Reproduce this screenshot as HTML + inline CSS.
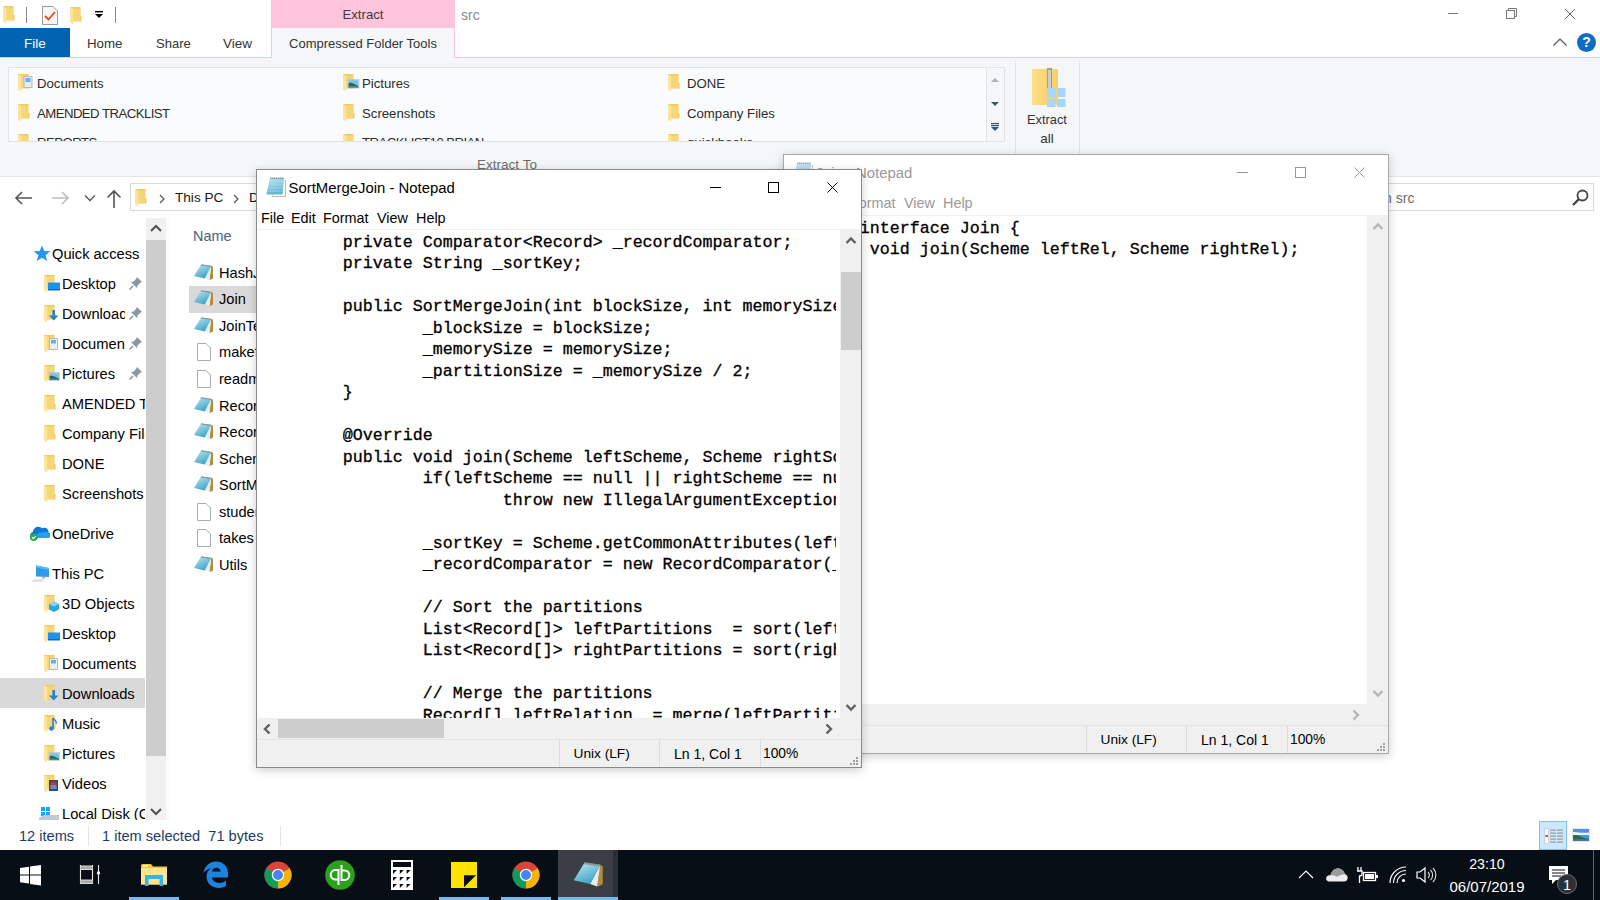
<!DOCTYPE html><html><head><meta charset="utf-8"><style>
html,body{margin:0;padding:0;width:1600px;height:900px;overflow:hidden;background:#fff;}
.a{position:absolute;}
.t{position:absolute;white-space:pre;}
.ls{font-family:"Liberation Sans",sans-serif;}
.lm{font-family:"Liberation Mono",monospace;-webkit-text-stroke:0.3px #000;}
.win{position:absolute;overflow:hidden;}
</style></head><body>
<svg width="0" height="0" style="position:absolute"><defs><linearGradient id="npb" x1="0" y1="0" x2="0.6" y2="1"><stop offset="0" stop-color="#c4ebf5"/><stop offset="1" stop-color="#3aa2c4"/></linearGradient></defs></svg>
<div class="a" style="left:0px;top:0px;width:1600px;height:28px;background:#fff"></div><svg class="a" style="left:3px;top:6px;" width="20" height="19" viewBox="0 0 20 19"><path d="M0 0 H10.5 V9 H11.5 V14.5 H0 Z" fill="#f2ca5c"/><path d="M3 1.5 H10 V14 H3 Z" fill="#f6d777"/><path d="M0 0 L3.2 2 V17.5 L0 15.5 Z" fill="#fde49a"/></svg><div class="a" style="left:26px;top:7px;width:1px;height:16px;background:#8a8a8a"></div><svg class="a" style="left:41px;top:5px;" width="18" height="21" viewBox="0 0 18 21"><path d="M1.5 1.5 H12 L16.5 6 V19.5 H1.5 Z" fill="#f7f7f7" stroke="#9a9a9a"/><path d="M4 11 L7.5 14.5 L14 7" fill="none" stroke="#e04a1a" stroke-width="1.8"/></svg><svg class="a" style="left:70px;top:7px;" width="20" height="19" viewBox="0 0 20 19"><path d="M0 0 H10.5 V9 H11.5 V14.5 H0 Z" fill="#f2ca5c"/><path d="M3 1.5 H10 V14 H3 Z" fill="#f6d777"/><path d="M0 0 L3.2 2 V17.5 L0 15.5 Z" fill="#fde49a"/></svg><svg class="a" style="left:94px;top:10px;" width="10" height="10" viewBox="0 0 10 10"><rect x="1" y="1" width="8" height="1.4" fill="#000"/><path d="M1 4 H9 L5 8 Z" fill="#000"/></svg><div class="a" style="left:115px;top:7px;width:1px;height:16px;background:#8a8a8a"></div><div class="a" style="left:271px;top:0px;width:184px;height:28px;background:#fec5dd"></div><div class="t ls" style="left:271px;top:5.0px;height:20px;line-height:20px;font-size:13.2px;color:#3b3b3b;width:184px;text-align:center;">Extract</div><div class="t ls" style="left:461px;top:5.0px;height:20px;line-height:20px;font-size:14px;color:#8c8c8c;">src</div><div class="a" style="left:1448px;top:13px;width:10px;height:1px;background:#777"></div><svg class="a" style="left:1504px;top:6px;" width="14" height="14" viewBox="0 0 14 14"><rect x="2.5" y="4.5" width="8" height="8" fill="none" stroke="#777"/><path d="M4.5 4.5 V2.5 H12.5 V10.5 H10.5" fill="none" stroke="#777"/></svg><svg class="a" style="left:1564px;top:8px;" width="12" height="12" viewBox="0 0 12 12"><path d="M1 1 L11 11 M11 1 L1 11" stroke="#666" stroke-width="1"/></svg><div class="a" style="left:0px;top:28px;width:70px;height:29px;background:#0063b1"></div><div class="t ls" style="left:0px;top:34.0px;height:20px;line-height:20px;font-size:13.5px;color:#fff;width:70px;text-align:center;">File</div><div class="t ls" style="left:87px;top:33.5px;height:20px;line-height:20px;font-size:13.3px;color:#333;">Home</div><div class="t ls" style="left:156px;top:33.5px;height:20px;line-height:20px;font-size:13px;color:#333;">Share</div><div class="t ls" style="left:223px;top:33.5px;height:20px;line-height:20px;font-size:13.5px;color:#333;">View</div><div class="a" style="left:0px;top:57px;width:1600px;height:1px;background:#fdc3dc"></div><div class="a" style="left:271px;top:28px;width:184px;height:30px;background:#f5f6f7;border-left:1px solid #fdc3dc;border-right:1px solid #fdc3dc;box-sizing:border-box"></div><div class="t ls" style="left:271px;top:33.5px;height:20px;line-height:20px;font-size:13px;color:#333;width:184px;text-align:center;">Compressed Folder Tools</div><svg class="a" style="left:1552px;top:37px;" width="16" height="10" viewBox="0 0 16 10"><path d="M1.5 8.5 L8 2 L14.5 8.5" fill="none" stroke="#555" stroke-width="1.2"/></svg><div class="a" style="left:1577px;top:33px;width:19px;height:19px;border-radius:50%;background:#0f6cc4;color:#fff;font-weight:bold;font-size:14px;line-height:19px;font-family:Liberation Sans,sans-serif;text-align:center">?</div><div class="a" style="left:0px;top:58px;width:1600px;height:118px;background:#f5f6f7"></div><div class="a" style="left:0px;top:176px;width:1600px;height:1px;background:#e4e5e7"></div><div class="a" style="left:8px;top:67px;width:997px;height:75px;background:#fafbfc;border:1px solid #e2e3e5;box-sizing:border-box"></div><div class="a" style="left:986px;top:67px;width:19px;height:75px;background:#f5f6f7;border:1px solid #e2e3e5;box-sizing:border-box"></div><svg class="a" style="left:989px;top:75px;" width="12" height="10" viewBox="0 0 12 10"><path d="M2 7 L6 3 L10 7 Z" fill="#a8b0ba"/></svg><svg class="a" style="left:989px;top:99px;" width="12" height="10" viewBox="0 0 12 10"><path d="M2 3 L6 7 L10 3 Z" fill="#3d5170"/></svg><svg class="a" style="left:989px;top:121px;" width="12" height="12" viewBox="0 0 12 12"><rect x="2" y="2" width="8" height="1.2" fill="#3d5170"/><rect x="2" y="4" width="8" height="1.2" fill="#3d5170"/><path d="M2 6 L6 10 L10 6 Z" fill="#3d5170"/></svg><div class="win" style="left:9px;top:68px;width:976px;height:73px"><svg class="a" style="left:9px;top:6.0px;" width="20" height="19" viewBox="0 0 20 19"><path d="M0 0 H10.5 V9 H11.5 V14.5 H0 Z" fill="#f2ca5c"/><path d="M3 1.5 H10 V14 H3 Z" fill="#f6d777"/><path d="M0 0 L3.2 2 V17.5 L0 15.5 Z" fill="#fde49a"/><rect x="6" y="2.5" width="8" height="11" fill="#e9ecef" stroke="#a9aeb3" stroke-width="0.8"/><path d="M7.5 4 h5 v4 h-5z" fill="#5fb2ec"/></svg><div class="t ls" style="left:28px;top:5.800000000000001px;height:20px;line-height:20px;font-size:13.2px;color:#2b2b2b;">Documents</div><svg class="a" style="left:9px;top:35.8px;" width="20" height="19" viewBox="0 0 20 19"><path d="M0 0 H10.5 V9 H11.5 V14.5 H0 Z" fill="#f2ca5c"/><path d="M3 1.5 H10 V14 H3 Z" fill="#f6d777"/><path d="M0 0 L3.2 2 V17.5 L0 15.5 Z" fill="#fde49a"/></svg><div class="t ls" style="left:28px;top:35.599999999999994px;height:20px;line-height:20px;font-size:13.2px;color:#2b2b2b;letter-spacing:-0.55px">AMENDED TRACKLIST</div><svg class="a" style="left:9px;top:65.6px;" width="20" height="19" viewBox="0 0 20 19"><path d="M0 0 H10.5 V9 H11.5 V14.5 H0 Z" fill="#f2ca5c"/><path d="M3 1.5 H10 V14 H3 Z" fill="#f6d777"/><path d="M0 0 L3.2 2 V17.5 L0 15.5 Z" fill="#fde49a"/></svg><div class="t ls" style="left:28px;top:65.39999999999999px;height:20px;line-height:20px;font-size:13.2px;color:#2b2b2b;letter-spacing:-0.55px">REPORTS</div><svg class="a" style="left:334px;top:6.0px;" width="20" height="19" viewBox="0 0 20 19"><path d="M0 0 H10.5 V9 H11.5 V14.5 H0 Z" fill="#f2ca5c"/><path d="M3 1.5 H10 V14 H3 Z" fill="#f6d777"/><path d="M0 0 L3.2 2 V17.5 L0 15.5 Z" fill="#fde49a"/><rect x="5" y="5.5" width="11" height="8.5" fill="#eee" stroke="#b5b5b5" stroke-width="0.6"/><rect x="5.6" y="6.1" width="9.8" height="7.3" fill="#79c2ee"/><path d="M5.6 13.4 V9 C8 8 11 9.5 15.4 12 V13.4 Z" fill="#2f6b3f"/><rect x="5.6" y="12.1" width="9.8" height="1.3" fill="#4a86c8"/></svg><div class="t ls" style="left:353px;top:5.800000000000001px;height:20px;line-height:20px;font-size:13.2px;color:#2b2b2b;">Pictures</div><svg class="a" style="left:334px;top:35.8px;" width="20" height="19" viewBox="0 0 20 19"><path d="M0 0 H10.5 V9 H11.5 V14.5 H0 Z" fill="#f2ca5c"/><path d="M3 1.5 H10 V14 H3 Z" fill="#f6d777"/><path d="M0 0 L3.2 2 V17.5 L0 15.5 Z" fill="#fde49a"/></svg><div class="t ls" style="left:353px;top:35.599999999999994px;height:20px;line-height:20px;font-size:13.2px;color:#2b2b2b;">Screenshots</div><svg class="a" style="left:334px;top:65.6px;" width="20" height="19" viewBox="0 0 20 19"><path d="M0 0 H10.5 V9 H11.5 V14.5 H0 Z" fill="#f2ca5c"/><path d="M3 1.5 H10 V14 H3 Z" fill="#f6d777"/><path d="M0 0 L3.2 2 V17.5 L0 15.5 Z" fill="#fde49a"/></svg><div class="t ls" style="left:353px;top:65.39999999999999px;height:20px;line-height:20px;font-size:13.2px;color:#2b2b2b;letter-spacing:-0.55px">TRACKLIST10 BRIAN</div><svg class="a" style="left:659px;top:6.0px;" width="20" height="19" viewBox="0 0 20 19"><path d="M0 0 H10.5 V9 H11.5 V14.5 H0 Z" fill="#f2ca5c"/><path d="M3 1.5 H10 V14 H3 Z" fill="#f6d777"/><path d="M0 0 L3.2 2 V17.5 L0 15.5 Z" fill="#fde49a"/></svg><div class="t ls" style="left:678px;top:5.800000000000001px;height:20px;line-height:20px;font-size:13.2px;color:#2b2b2b;">DONE</div><svg class="a" style="left:659px;top:35.8px;" width="20" height="19" viewBox="0 0 20 19"><path d="M0 0 H10.5 V9 H11.5 V14.5 H0 Z" fill="#f2ca5c"/><path d="M3 1.5 H10 V14 H3 Z" fill="#f6d777"/><path d="M0 0 L3.2 2 V17.5 L0 15.5 Z" fill="#fde49a"/></svg><div class="t ls" style="left:678px;top:35.599999999999994px;height:20px;line-height:20px;font-size:13.2px;color:#2b2b2b;">Company Files</div><svg class="a" style="left:659px;top:65.6px;" width="20" height="19" viewBox="0 0 20 19"><path d="M0 0 H10.5 V9 H11.5 V14.5 H0 Z" fill="#f2ca5c"/><path d="M3 1.5 H10 V14 H3 Z" fill="#f6d777"/><path d="M0 0 L3.2 2 V17.5 L0 15.5 Z" fill="#fde49a"/></svg><div class="t ls" style="left:678px;top:65.39999999999999px;height:20px;line-height:20px;font-size:13.2px;color:#2b2b2b;">quickbooks</div></div><div class="a" style="left:1015px;top:61px;width:1px;height:113px;background:#e2e3e5"></div><div class="a" style="left:1079px;top:61px;width:1px;height:113px;background:#e2e3e5"></div><div class="t ls" style="left:0px;top:155.0px;height:20px;line-height:20px;font-size:13.5px;color:#6e6e6e;width:1014px;text-align:center;">Extract To</div><svg class="a" style="left:1030px;top:66px;" width="38" height="42" viewBox="0 0 38 42"><rect x="2" y="3" width="26" height="36" fill="#fbd46e"/><rect x="2" y="3" width="26" height="36" fill="url(#gz)"/><defs><linearGradient id="gz" x1="0" x2="1"><stop offset="0" stop-color="#fde8a4" stop-opacity=".6"/><stop offset="1" stop-color="#f5c552" stop-opacity=".2"/></linearGradient></defs><rect x="17" y="2" width="5" height="26" fill="#9aa0a6"/><rect x="18" y="4" width="3" height="22" fill="#c9ced3"/><rect x="17" y="22" width="8.5" height="9" fill="#a6d6fb"/><rect x="27" y="22" width="8.5" height="9" fill="#a6d6fb"/><rect x="17" y="33" width="8.5" height="8" fill="#a6d6fb"/><rect x="27" y="33" width="8.5" height="8" fill="#a6d6fb"/></svg><div class="t ls" style="left:1015px;top:110.0px;height:20px;line-height:20px;font-size:12.8px;color:#333;width:64px;text-align:center;">Extract</div><div class="t ls" style="left:1015px;top:129.0px;height:20px;line-height:20px;font-size:13.5px;color:#333;width:64px;text-align:center;">all</div><svg class="a" style="left:14px;top:190px;" width="20" height="16" viewBox="0 0 20 16"><path d="M2 8 H18 M8 2 L2 8 L8 14" fill="none" stroke="#555" stroke-width="1.6"/></svg><svg class="a" style="left:50px;top:190px;" width="20" height="16" viewBox="0 0 20 16"><path d="M2 8 H18 M12 2 L18 8 L12 14" fill="none" stroke="#bdbdbd" stroke-width="1.6"/></svg><svg class="a" style="left:84px;top:194px;" width="12" height="8" viewBox="0 0 12 8"><path d="M1 1.5 L6 6.5 L11 1.5" fill="none" stroke="#555" stroke-width="1.3"/></svg><svg class="a" style="left:106px;top:189px;" width="16" height="20" viewBox="0 0 16 20"><path d="M8 19 V2 M1.5 8.5 L8 2 L14.5 8.5" fill="none" stroke="#555" stroke-width="1.6"/></svg><div class="a" style="left:130px;top:183px;width:1300px;height:28px;background:#fff;border:1px solid #d9d9d9;box-sizing:border-box"></div><svg class="a" style="left:135px;top:189px;" width="20" height="19" viewBox="0 0 20 19"><path d="M0 0 H10.5 V9 H11.5 V14.5 H0 Z" fill="#f2ca5c"/><path d="M3 1.5 H10 V14 H3 Z" fill="#f6d777"/><path d="M0 0 L3.2 2 V17.5 L0 15.5 Z" fill="#fde49a"/></svg><svg class="a" style="left:158px;top:193px;" width="8" height="12" viewBox="0 0 8 12"><path d="M2 2 L6 6 L2 10" fill="none" stroke="#555" stroke-width="1.2"/></svg><div class="t ls" style="left:175px;top:188.0px;height:20px;line-height:20px;font-size:13.6px;color:#1a1a1a;">This PC</div><svg class="a" style="left:232px;top:193px;" width="8" height="12" viewBox="0 0 8 12"><path d="M2 2 L6 6 L2 10" fill="none" stroke="#555" stroke-width="1.2"/></svg><div class="t ls" style="left:249px;top:188.0px;height:20px;line-height:20px;font-size:13.6px;color:#1a1a1a;">Documents</div><div class="a" style="left:1340px;top:183px;width:254px;height:28px;background:#fff;border:1px solid #d9d9d9;box-sizing:border-box"></div><div class="t ls" style="left:1347.5px;top:187.5px;height:20px;line-height:20px;font-size:14px;color:#6d6d6d;">Search src</div><svg class="a" style="left:1570px;top:188px;" width="20" height="20" viewBox="0 0 20 20"><circle cx="12.5" cy="7.5" r="5" fill="none" stroke="#444" stroke-width="1.8"/><path d="M9 11 L3 17" stroke="#444" stroke-width="2.4"/></svg><div class="a" style="left:146px;top:218px;width:20px;height:602px;background:#f0f0f0"></div><div class="a" style="left:146px;top:240px;width:20px;height:516px;background:#cdcdcd"></div><svg class="a" style="left:149px;top:222px;" width="14" height="12" viewBox="0 0 14 12"><path d="M2 9 L7 4 L12 9" fill="none" stroke="#505050" stroke-width="2"/></svg><svg class="a" style="left:149px;top:806px;" width="14" height="12" viewBox="0 0 14 12"><path d="M2 3 L7 8 L12 3" fill="none" stroke="#505050" stroke-width="2"/></svg><div class="a" style="left:0px;top:678px;width:145px;height:30px;background:#d9d9d9"></div><div class="win" style="left:0;top:218px;width:145px;height:602px"><svg class="a" style="left:33px;top:27px;" width="18" height="17" viewBox="0 0 18 17"><path d="M9 0.5 L11.3 6 L17.3 6.3 L12.6 10.2 L14.2 16 L9 12.7 L3.8 16 L5.4 10.2 L0.7 6.3 L6.7 6 Z" fill="#2b95f0"/></svg><div class="t ls" style="left:52px;top:25.700000000000003px;height:20px;line-height:20px;font-size:14.7px;color:#000;overflow:hidden;width:93px;">Quick access</div><svg class="a" style="left:44px;top:57px;" width="20" height="19" viewBox="0 0 20 19"><path d="M0 0 H10.5 V9 H11.5 V14.5 H0 Z" fill="#f2ca5c"/><path d="M3 1.5 H10 V14 H3 Z" fill="#f6d777"/><path d="M0 0 L3.2 2 V17.5 L0 15.5 Z" fill="#fde49a"/><rect x="4" y="7.5" width="12" height="7.5" fill="#1e90f0"/><rect x="4" y="14" width="12" height="1.5" fill="#0f6cc4"/></svg><div class="t ls" style="left:62px;top:55.7px;height:20px;line-height:20px;font-size:14.7px;color:#000;overflow:hidden;width:63px;">Desktop</div><svg class="a" style="left:128px;top:57px;" width="16" height="16" viewBox="0 0 16 16"><path d="M9 2 L14 7 L12 8 L9.5 10.5 L9 13 L3 7 L5.5 6.5 L8 4 Z" fill="#8e969e"/><path d="M5 11 L1.5 14.5" stroke="#8e969e" stroke-width="1.6"/></svg><svg class="a" style="left:44px;top:87px;" width="20" height="19" viewBox="0 0 20 19"><path d="M0 0 H10.5 V9 H11.5 V14.5 H0 Z" fill="#f2ca5c"/><path d="M3 1.5 H10 V14 H3 Z" fill="#f6d777"/><path d="M0 0 L3.2 2 V17.5 L0 15.5 Z" fill="#fde49a"/><path d="M9.7 5 V12" stroke="#2a7fd8" stroke-width="2.6"/><path d="M5 10.5 L9.7 15.5 L14.4 10.5 Z" fill="#2a7fd8"/></svg><div class="t ls" style="left:62px;top:85.7px;height:20px;line-height:20px;font-size:14.7px;color:#000;overflow:hidden;width:63px;">Downloads</div><svg class="a" style="left:128px;top:87px;" width="16" height="16" viewBox="0 0 16 16"><path d="M9 2 L14 7 L12 8 L9.5 10.5 L9 13 L3 7 L5.5 6.5 L8 4 Z" fill="#8e969e"/><path d="M5 11 L1.5 14.5" stroke="#8e969e" stroke-width="1.6"/></svg><svg class="a" style="left:44px;top:117px;" width="20" height="19" viewBox="0 0 20 19"><path d="M0 0 H10.5 V9 H11.5 V14.5 H0 Z" fill="#f2ca5c"/><path d="M3 1.5 H10 V14 H3 Z" fill="#f6d777"/><path d="M0 0 L3.2 2 V17.5 L0 15.5 Z" fill="#fde49a"/><rect x="5.5" y="3.5" width="8" height="11" fill="#eceff2" stroke="#a9aeb3" stroke-width="0.8"/><path d="M7 5 h5 v3.5 h-5z" fill="#5fb2ec"/></svg><div class="t ls" style="left:62px;top:115.7px;height:20px;line-height:20px;font-size:14.7px;color:#000;overflow:hidden;width:63px;">Documents</div><svg class="a" style="left:128px;top:117px;" width="16" height="16" viewBox="0 0 16 16"><path d="M9 2 L14 7 L12 8 L9.5 10.5 L9 13 L3 7 L5.5 6.5 L8 4 Z" fill="#8e969e"/><path d="M5 11 L1.5 14.5" stroke="#8e969e" stroke-width="1.6"/></svg><svg class="a" style="left:44px;top:147px;" width="20" height="19" viewBox="0 0 20 19"><path d="M0 0 H10.5 V9 H11.5 V14.5 H0 Z" fill="#f2ca5c"/><path d="M3 1.5 H10 V14 H3 Z" fill="#f6d777"/><path d="M0 0 L3.2 2 V17.5 L0 15.5 Z" fill="#fde49a"/><rect x="5" y="7.5" width="10.5" height="8" fill="#eee" stroke="#b5b5b5" stroke-width="0.6"/><rect x="5.6" y="8.1" width="9.3" height="6.8" fill="#79c2ee"/><path d="M5.6 14.9 V11 C8 10 11 11.5 14.9 13.5 V14.9 Z" fill="#2f6b3f"/><rect x="5.6" y="13.6" width="9.3" height="1.3" fill="#4a86c8"/></svg><div class="t ls" style="left:62px;top:145.7px;height:20px;line-height:20px;font-size:14.7px;color:#000;overflow:hidden;width:63px;">Pictures</div><svg class="a" style="left:128px;top:147px;" width="16" height="16" viewBox="0 0 16 16"><path d="M9 2 L14 7 L12 8 L9.5 10.5 L9 13 L3 7 L5.5 6.5 L8 4 Z" fill="#8e969e"/><path d="M5 11 L1.5 14.5" stroke="#8e969e" stroke-width="1.6"/></svg><svg class="a" style="left:44px;top:177px;" width="20" height="19" viewBox="0 0 20 19"><path d="M0 0 H10.5 V9 H11.5 V14.5 H0 Z" fill="#f2ca5c"/><path d="M3 1.5 H10 V14 H3 Z" fill="#f6d777"/><path d="M0 0 L3.2 2 V17.5 L0 15.5 Z" fill="#fde49a"/></svg><div class="t ls" style="left:62px;top:175.7px;height:20px;line-height:20px;font-size:14.7px;color:#000;overflow:hidden;width:83px;">AMENDED TRACKLIST</div><svg class="a" style="left:44px;top:207px;" width="20" height="19" viewBox="0 0 20 19"><path d="M0 0 H10.5 V9 H11.5 V14.5 H0 Z" fill="#f2ca5c"/><path d="M3 1.5 H10 V14 H3 Z" fill="#f6d777"/><path d="M0 0 L3.2 2 V17.5 L0 15.5 Z" fill="#fde49a"/></svg><div class="t ls" style="left:62px;top:205.7px;height:20px;line-height:20px;font-size:14.7px;color:#000;overflow:hidden;width:83px;">Company Files</div><svg class="a" style="left:44px;top:237px;" width="20" height="19" viewBox="0 0 20 19"><path d="M0 0 H10.5 V9 H11.5 V14.5 H0 Z" fill="#f2ca5c"/><path d="M3 1.5 H10 V14 H3 Z" fill="#f6d777"/><path d="M0 0 L3.2 2 V17.5 L0 15.5 Z" fill="#fde49a"/></svg><div class="t ls" style="left:62px;top:235.7px;height:20px;line-height:20px;font-size:14.7px;color:#000;overflow:hidden;width:83px;">DONE</div><svg class="a" style="left:44px;top:267px;" width="20" height="19" viewBox="0 0 20 19"><path d="M0 0 H10.5 V9 H11.5 V14.5 H0 Z" fill="#f2ca5c"/><path d="M3 1.5 H10 V14 H3 Z" fill="#f6d777"/><path d="M0 0 L3.2 2 V17.5 L0 15.5 Z" fill="#fde49a"/></svg><div class="t ls" style="left:62px;top:265.7px;height:20px;line-height:20px;font-size:14.7px;color:#000;overflow:hidden;width:83px;">Screenshots</div><svg class="a" style="left:29px;top:306px;" width="22" height="18" viewBox="0 0 22 18"><path d="M4 14 C0.5 14 0.2 8.5 3.8 8 C4.5 3 9.5 1 13 4.2 C16.5 2.5 20 5 19.5 8.5 C22 9 21.8 14 19 14 Z" fill="#0f78d4"/><path d="M7 14 C7 10 10 8 13.5 8.5 C16 7.5 19.5 8 19.8 10 C21.5 11 21.5 14 19 14 Z" fill="#28a0ef"/><circle cx="4.8" cy="13.2" r="3.8" fill="#2ba84a"/><path d="M3 13.2 L4.4 14.6 L6.8 12" stroke="#fff" stroke-width="1.1" fill="none"/></svg><div class="t ls" style="left:52px;top:305.7px;height:20px;line-height:20px;font-size:14.7px;color:#000;overflow:hidden;width:93px;">OneDrive</div><svg class="a" style="left:30px;top:346px;" width="22" height="20" viewBox="0 0 22 20"><path d="M6 1.5 L19 4 V13 L6 12.5 Z" fill="#2f9ae8"/><path d="M6 1.5 L19 4 V6 L6 3.5 Z" fill="#5cb8f2"/><path d="M12 13 H15 V14.5 H12Z" fill="#aab"/><path d="M1 17.5 L4 15.5 H15 L12 17.5 Z" fill="#d4dae0"/></svg><div class="t ls" style="left:52px;top:345.7px;height:20px;line-height:20px;font-size:14.7px;color:#000;overflow:hidden;width:93px;">This PC</div><svg class="a" style="left:44px;top:377px;" width="20" height="19" viewBox="0 0 20 19"><path d="M0 0 H10.5 V9 H11.5 V14.5 H0 Z" fill="#f2ca5c"/><path d="M3 1.5 H10 V14 H3 Z" fill="#f6d777"/><path d="M0 0 L3.2 2 V17.5 L0 15.5 Z" fill="#fde49a"/><path d="M5 9 L10 6.5 L15 9 V14.5 L10 17 L5 14.5 Z" fill="#29a8e0"/><path d="M5 9 L10 11.5 L15 9 L10 6.5Z" fill="#8fd3f4"/></svg><div class="t ls" style="left:62px;top:375.7px;height:20px;line-height:20px;font-size:14.7px;color:#000;overflow:hidden;width:83px;">3D Objects</div><svg class="a" style="left:44px;top:407px;" width="20" height="19" viewBox="0 0 20 19"><path d="M0 0 H10.5 V9 H11.5 V14.5 H0 Z" fill="#f2ca5c"/><path d="M3 1.5 H10 V14 H3 Z" fill="#f6d777"/><path d="M0 0 L3.2 2 V17.5 L0 15.5 Z" fill="#fde49a"/><rect x="4" y="7.5" width="12" height="7.5" fill="#1e90f0"/><rect x="4" y="14" width="12" height="1.5" fill="#0f6cc4"/></svg><div class="t ls" style="left:62px;top:405.7px;height:20px;line-height:20px;font-size:14.7px;color:#000;overflow:hidden;width:83px;">Desktop</div><svg class="a" style="left:44px;top:437px;" width="20" height="19" viewBox="0 0 20 19"><path d="M0 0 H10.5 V9 H11.5 V14.5 H0 Z" fill="#f2ca5c"/><path d="M3 1.5 H10 V14 H3 Z" fill="#f6d777"/><path d="M0 0 L3.2 2 V17.5 L0 15.5 Z" fill="#fde49a"/><rect x="5.5" y="3.5" width="8" height="11" fill="#eceff2" stroke="#a9aeb3" stroke-width="0.8"/><path d="M7 5 h5 v3.5 h-5z" fill="#5fb2ec"/></svg><div class="t ls" style="left:62px;top:435.7px;height:20px;line-height:20px;font-size:14.7px;color:#000;overflow:hidden;width:83px;">Documents</div><svg class="a" style="left:44px;top:467px;" width="20" height="19" viewBox="0 0 20 19"><path d="M0 0 H10.5 V9 H11.5 V14.5 H0 Z" fill="#f2ca5c"/><path d="M3 1.5 H10 V14 H3 Z" fill="#f6d777"/><path d="M0 0 L3.2 2 V17.5 L0 15.5 Z" fill="#fde49a"/><path d="M9.7 5 V12" stroke="#2a7fd8" stroke-width="2.6"/><path d="M5 10.5 L9.7 15.5 L14.4 10.5 Z" fill="#2a7fd8"/></svg><div class="t ls" style="left:62px;top:465.7px;height:20px;line-height:20px;font-size:14.7px;color:#000;overflow:hidden;width:83px;">Downloads</div><svg class="a" style="left:44px;top:497px;" width="20" height="19" viewBox="0 0 20 19"><path d="M0 0 H10.5 V9 H11.5 V14.5 H0 Z" fill="#f2ca5c"/><path d="M3 1.5 H10 V14 H3 Z" fill="#f6d777"/><path d="M0 0 L3.2 2 V17.5 L0 15.5 Z" fill="#fde49a"/><path d="M9 3 V13" stroke="#2a7fd8" stroke-width="1.6"/><circle cx="7.5" cy="13.5" r="2.2" fill="#2a7fd8"/><path d="M9 3 C11 5 13 6 12 9" fill="none" stroke="#2a7fd8" stroke-width="1.4"/></svg><div class="t ls" style="left:62px;top:495.7px;height:20px;line-height:20px;font-size:14.7px;color:#000;overflow:hidden;width:83px;">Music</div><svg class="a" style="left:44px;top:527px;" width="20" height="19" viewBox="0 0 20 19"><path d="M0 0 H10.5 V9 H11.5 V14.5 H0 Z" fill="#f2ca5c"/><path d="M3 1.5 H10 V14 H3 Z" fill="#f6d777"/><path d="M0 0 L3.2 2 V17.5 L0 15.5 Z" fill="#fde49a"/><rect x="5" y="7.5" width="10.5" height="8" fill="#eee" stroke="#b5b5b5" stroke-width="0.6"/><rect x="5.6" y="8.1" width="9.3" height="6.8" fill="#79c2ee"/><path d="M5.6 14.9 V11 C8 10 11 11.5 14.9 13.5 V14.9 Z" fill="#2f6b3f"/><rect x="5.6" y="13.6" width="9.3" height="1.3" fill="#4a86c8"/></svg><div class="t ls" style="left:62px;top:525.7px;height:20px;line-height:20px;font-size:14.7px;color:#000;overflow:hidden;width:83px;">Pictures</div><svg class="a" style="left:44px;top:557px;" width="20" height="19" viewBox="0 0 20 19"><path d="M0 0 H10.5 V9 H11.5 V14.5 H0 Z" fill="#f2ca5c"/><path d="M3 1.5 H10 V14 H3 Z" fill="#f6d777"/><path d="M0 0 L3.2 2 V17.5 L0 15.5 Z" fill="#fde49a"/><rect x="5" y="5" width="9" height="11" fill="#3b4a6b"/><rect x="6.5" y="7" width="6" height="7" fill="#c0392b"/><path d="M6.5 10 h6 v4 h-6z" fill="#5a8fd0"/></svg><div class="t ls" style="left:62px;top:555.7px;height:20px;line-height:20px;font-size:14.7px;color:#000;overflow:hidden;width:83px;">Videos</div><svg class="a" style="left:38px;top:586px;" width="22" height="20" viewBox="0 0 22 20"><rect x="3" y="3" width="4" height="4" fill="#1ea2ff"/><rect x="8" y="3" width="4" height="4" fill="#1ea2ff"/><rect x="3" y="8" width="4" height="4" fill="#1ea2ff"/><rect x="8" y="8" width="4" height="4" fill="#1ea2ff"/><path d="M1 14 L6 11 H21 V17 H1 Z" fill="#c2c8cf"/></svg><div class="t ls" style="left:62px;top:585.7px;height:20px;line-height:20px;font-size:14.7px;color:#000;overflow:hidden;width:83px;">Local Disk (C:)</div></div><div class="a" style="left:166px;top:218px;width:4px;height:602px;background:#fbfbfb"></div><div class="t ls" style="left:193px;top:226.0px;height:20px;line-height:20px;font-size:14.4px;color:#4c607a;">Name</div><div class="a" style="left:189px;top:286px;width:1200px;height:27px;background:#d9d9d9"></div><svg class="a" style="left:193px;top:263.8px;" width="22" height="19" viewBox="0 0 22 19"><path d="M18 1.8 L20 2.8 V14.5 L16.5 16.2 Z" fill="#b38b3c"/><path d="M18.3 2 L16.4 16.1 L11.7 14.4 Z" fill="#e4edf1"/><path d="M8 0.5 L18.3 2 L11.7 14.4 L1 12 Z" fill="url(#npb)"/><path d="M8 0.8 L18.3 2.3" stroke="#8a979b" stroke-width="1.3"/></svg><div class="t ls" style="left:219px;top:262.8px;height:20px;line-height:20px;font-size:14.6px;color:#000;">HashJoin</div><svg class="a" style="left:193px;top:290.36px;" width="22" height="19" viewBox="0 0 22 19"><path d="M18 1.8 L20 2.8 V14.5 L16.5 16.2 Z" fill="#b38b3c"/><path d="M18.3 2 L16.4 16.1 L11.7 14.4 Z" fill="#e4edf1"/><path d="M8 0.5 L18.3 2 L11.7 14.4 L1 12 Z" fill="url(#npb)"/><path d="M8 0.8 L18.3 2.3" stroke="#8a979b" stroke-width="1.3"/></svg><div class="t ls" style="left:219px;top:289.36px;height:20px;line-height:20px;font-size:14.6px;color:#000;">Join</div><svg class="a" style="left:193px;top:316.92px;" width="22" height="19" viewBox="0 0 22 19"><path d="M18 1.8 L20 2.8 V14.5 L16.5 16.2 Z" fill="#b38b3c"/><path d="M18.3 2 L16.4 16.1 L11.7 14.4 Z" fill="#e4edf1"/><path d="M8 0.5 L18.3 2 L11.7 14.4 L1 12 Z" fill="url(#npb)"/><path d="M8 0.8 L18.3 2.3" stroke="#8a979b" stroke-width="1.3"/></svg><div class="t ls" style="left:219px;top:315.92px;height:20px;line-height:20px;font-size:14.6px;color:#000;">JoinTest</div><svg class="a" style="left:196px;top:342.48px;" width="16" height="20" viewBox="0 0 16 20"><path d="M1.5 1.5 H10 L14.5 6 V18.5 H1.5 Z" fill="#fff" stroke="#aaa"/></svg><div class="t ls" style="left:219px;top:342.48px;height:20px;line-height:20px;font-size:14.6px;color:#000;">makefile</div><svg class="a" style="left:196px;top:369.04px;" width="16" height="20" viewBox="0 0 16 20"><path d="M1.5 1.5 H10 L14.5 6 V18.5 H1.5 Z" fill="#fff" stroke="#aaa"/></svg><div class="t ls" style="left:219px;top:369.04px;height:20px;line-height:20px;font-size:14.6px;color:#000;">readme</div><svg class="a" style="left:193px;top:396.6px;" width="22" height="19" viewBox="0 0 22 19"><path d="M18 1.8 L20 2.8 V14.5 L16.5 16.2 Z" fill="#b38b3c"/><path d="M18.3 2 L16.4 16.1 L11.7 14.4 Z" fill="#e4edf1"/><path d="M8 0.5 L18.3 2 L11.7 14.4 L1 12 Z" fill="url(#npb)"/><path d="M8 0.8 L18.3 2.3" stroke="#8a979b" stroke-width="1.3"/></svg><div class="t ls" style="left:219px;top:395.6px;height:20px;line-height:20px;font-size:14.6px;color:#000;">Record</div><svg class="a" style="left:193px;top:423.15999999999997px;" width="22" height="19" viewBox="0 0 22 19"><path d="M18 1.8 L20 2.8 V14.5 L16.5 16.2 Z" fill="#b38b3c"/><path d="M18.3 2 L16.4 16.1 L11.7 14.4 Z" fill="#e4edf1"/><path d="M8 0.5 L18.3 2 L11.7 14.4 L1 12 Z" fill="url(#npb)"/><path d="M8 0.8 L18.3 2.3" stroke="#8a979b" stroke-width="1.3"/></svg><div class="t ls" style="left:219px;top:422.15999999999997px;height:20px;line-height:20px;font-size:14.6px;color:#000;">RecordComparator</div><svg class="a" style="left:193px;top:449.72px;" width="22" height="19" viewBox="0 0 22 19"><path d="M18 1.8 L20 2.8 V14.5 L16.5 16.2 Z" fill="#b38b3c"/><path d="M18.3 2 L16.4 16.1 L11.7 14.4 Z" fill="#e4edf1"/><path d="M8 0.5 L18.3 2 L11.7 14.4 L1 12 Z" fill="url(#npb)"/><path d="M8 0.8 L18.3 2.3" stroke="#8a979b" stroke-width="1.3"/></svg><div class="t ls" style="left:219px;top:448.72px;height:20px;line-height:20px;font-size:14.6px;color:#000;">Scheme</div><svg class="a" style="left:193px;top:476.28px;" width="22" height="19" viewBox="0 0 22 19"><path d="M18 1.8 L20 2.8 V14.5 L16.5 16.2 Z" fill="#b38b3c"/><path d="M18.3 2 L16.4 16.1 L11.7 14.4 Z" fill="#e4edf1"/><path d="M8 0.5 L18.3 2 L11.7 14.4 L1 12 Z" fill="url(#npb)"/><path d="M8 0.8 L18.3 2.3" stroke="#8a979b" stroke-width="1.3"/></svg><div class="t ls" style="left:219px;top:475.28px;height:20px;line-height:20px;font-size:14.6px;color:#000;">SortMergeJoin</div><svg class="a" style="left:196px;top:501.84000000000003px;" width="16" height="20" viewBox="0 0 16 20"><path d="M1.5 1.5 H10 L14.5 6 V18.5 H1.5 Z" fill="#fff" stroke="#aaa"/></svg><div class="t ls" style="left:219px;top:501.84000000000003px;height:20px;line-height:20px;font-size:14.6px;color:#000;">students</div><svg class="a" style="left:196px;top:528.4px;" width="16" height="20" viewBox="0 0 16 20"><path d="M1.5 1.5 H10 L14.5 6 V18.5 H1.5 Z" fill="#fff" stroke="#aaa"/></svg><div class="t ls" style="left:219px;top:528.4px;height:20px;line-height:20px;font-size:14.6px;color:#000;">takes</div><svg class="a" style="left:193px;top:555.96px;" width="22" height="19" viewBox="0 0 22 19"><path d="M18 1.8 L20 2.8 V14.5 L16.5 16.2 Z" fill="#b38b3c"/><path d="M18.3 2 L16.4 16.1 L11.7 14.4 Z" fill="#e4edf1"/><path d="M8 0.5 L18.3 2 L11.7 14.4 L1 12 Z" fill="url(#npb)"/><path d="M8 0.8 L18.3 2.3" stroke="#8a979b" stroke-width="1.3"/></svg><div class="t ls" style="left:219px;top:554.96px;height:20px;line-height:20px;font-size:14.6px;color:#000;">Utils</div><div class="t ls" style="left:19px;top:826.0px;height:20px;line-height:20px;font-size:14.6px;color:#1e3a5f;">12 items</div><div class="a" style="left:88px;top:826px;width:1px;height:20px;background:#e5e5e5"></div><div class="t ls" style="left:102px;top:826.0px;height:20px;line-height:20px;font-size:14.6px;color:#1e3a5f;">1 item selected  71 bytes</div><div class="a" style="left:280px;top:826px;width:1px;height:20px;background:#e5e5e5"></div><div class="a" style="left:1539px;top:821px;width:28px;height:29px;background:#cce8ff;border:1px solid #7ec0ee;box-sizing:border-box"></div><svg class="a" style="left:1544px;top:828px;" width="20" height="16" viewBox="0 0 20 16"><rect x="1" y="0.5" width="3.5" height="15" fill="#fff" stroke="#bbb" stroke-width="0.6"/><g fill="#999"><rect x="6" y="1.5" width="6" height="1.2"/><rect x="13" y="1.5" width="6" height="1.2"/><rect x="6" y="4.5" width="6" height="1.2"/><rect x="13" y="4.5" width="6" height="1.2"/><rect x="6" y="7.5" width="6" height="1.2"/><rect x="13" y="7.5" width="6" height="1.2"/><rect x="6" y="10.5" width="6" height="1.2"/><rect x="13" y="10.5" width="6" height="1.2"/><rect x="6" y="13.5" width="6" height="1.2"/><rect x="13" y="13.5" width="6" height="1.2"/></g><rect x="1.5" y="7" width="2.5" height="2" fill="#e04a1a"/></svg><svg class="a" style="left:1571px;top:827px;" width="20" height="16" viewBox="0 0 20 16"><rect x="1" y="1" width="18" height="14" fill="#eee4d8"/><rect x="2" y="2" width="16" height="12" fill="#4a93e6"/><path d="M2 5 C6 4.5 10 6.5 18 5.5 V8 H2 Z" fill="#eef3f8"/><path d="M2 14 V8.5 C5 7 9 9 13 11 L18 12 V14 Z" fill="#2f6a3c"/><path d="M2 12.2 H18 V14 H2 Z" fill="#3c78c2"/></svg><div class="win" style="left:783px;top:154px;width:606px;height:600px;background:#fff;box-shadow:0 2px 9px rgba(0,0,0,0.2);border:1px solid #aaaaaa;box-sizing:border-box;overflow:hidden"><svg class="a" style="left:9px;top:7px;opacity:0.75" width="20" height="20" viewBox="0 0 20 20"><path d="M6 3 H20 V20 H6 Z" fill="#c9b98f"/><path d="M6.5 3.5 H19 V19 H6.5 Z" fill="#fff"/><path d="M4 1.2 H18 L16.7 17.6 H0.3 Z" fill="url(#npt)"/><g stroke="#b9dde8" stroke-width="0.6"><path d="M3.2 5 H17.4 M2.8 8 H17.2 M2.4 11 H17 M2 14 H16.8"/></g><path d="M4.2 1.2 H18" stroke="#6f7d86" stroke-width="1.6" stroke-dasharray="1.2 0.8"/><defs><linearGradient id="npt" x1="0" y1="0" x2="0.3" y2="1"><stop offset="0" stop-color="#bfe6f2"/><stop offset="1" stop-color="#5fb6d2"/></linearGradient></defs></svg><div class="t ls" style="left:31.5px;top:8.0px;height:20px;line-height:20px;font-size:14.9px;color:#999;">Join - Notepad</div><div class="a" style="left:453px;top:17px;width:11px;height:1px;background:#999"></div><svg class="a" style="left:510.5px;top:11.5px;" width="11" height="11" viewBox="0 0 11 11"><rect x="0.5" y="0.5" width="10" height="10" fill="none" stroke="#999"/></svg><svg class="a" style="left:569.5px;top:11.5px;" width="11" height="11" viewBox="0 0 11 11"><path d="M0.5 0.5 L10.5 10.5 M10.5 0.5 L0.5 10.5" stroke="#999" stroke-width="1"/></svg><div class="t ls" style="left:4px;top:38.0px;height:20px;line-height:20px;font-size:14.4px;color:#999;">File</div><div class="t ls" style="left:34px;top:38.0px;height:20px;line-height:20px;font-size:14.4px;color:#999;">Edit</div><div class="t ls" style="left:66px;top:38.0px;height:20px;line-height:20px;font-size:14.4px;color:#999;">Format</div><div class="t ls" style="left:120px;top:38.0px;height:20px;line-height:20px;font-size:14.4px;color:#999;">View</div><div class="t ls" style="left:159px;top:38.0px;height:20px;line-height:20px;font-size:14.4px;color:#999;">Help</div><div class="a" style="left:-1px;top:60px;width:606px;height:1px;background:#f0f0f0"></div><div class="win" style="left:0px;top:60px;width:579px;height:489px"><div class="t lm" style="left:5.8px;top:2.5500000000000007px;height:21.5px;line-height:21.5px;font-size:16.66px;color:#000;">public interface Join {</div><div class="t lm" style="left:5.8px;top:24.049999999999997px;height:21.5px;line-height:21.5px;font-size:16.66px;color:#000;">        void join(Scheme leftRel, Scheme rightRel);</div><div class="t lm" style="left:5.8px;top:45.55px;height:21.5px;line-height:21.5px;font-size:16.66px;color:#000;">}</div></div><div class="a" style="left:583px;top:60px;width:21px;height:489px;background:#f0f0f0"></div><svg class="a" style="left:587px;top:66px;" width="14" height="10" viewBox="0 0 14 10"><path d="M2.5 8 L7 3.5 L11.5 8" fill="none" stroke="#b5b5b5" stroke-width="2.4"/></svg><svg class="a" style="left:587px;top:534px;" width="14" height="10" viewBox="0 0 14 10"><path d="M2.5 2 L7 6.5 L11.5 2" fill="none" stroke="#b5b5b5" stroke-width="2.4"/></svg><div class="a" style="left:-1px;top:549px;width:606px;height:21px;background:#f0f0f0"></div><svg class="a" style="left:567px;top:553px;" width="10" height="14" viewBox="0 0 10 14"><path d="M2.5 2.5 L7 7 L2.5 11.5" fill="none" stroke="#b5b5b5" stroke-width="2.4"/></svg><div class="a" style="left:-1px;top:570px;width:606px;height:529px;background:#f0f0f0;border-top:1px solid #e3e3e3;box-sizing:border-box"></div><div class="a" style="left:302px;top:571px;width:1px;height:27px;background:#dcdcdc"></div><div class="a" style="left:402px;top:571px;width:1px;height:27px;background:#dcdcdc"></div><div class="a" style="left:503px;top:571px;width:1px;height:27px;background:#dcdcdc"></div><div class="t ls" style="left:316.5px;top:575.2px;height:20px;line-height:20px;font-size:13.7px;color:#000;">Unix (LF)</div><div class="t ls" style="left:417px;top:575.2px;height:20px;line-height:20px;font-size:14px;color:#000;">Ln 1, Col 1</div><div class="t ls" style="left:506px;top:575.2px;height:20px;line-height:20px;font-size:13.8px;color:#000;">100%</div><svg class="a" style="left:591px;top:586px;" width="12" height="12" viewBox="0 0 12 12"><g fill="#a0a0a0"><rect x="8" y="2" width="2" height="2"/><rect x="5" y="5" width="2" height="2"/><rect x="8" y="5" width="2" height="2"/><rect x="2" y="8" width="2" height="2"/><rect x="5" y="8" width="2" height="2"/><rect x="8" y="8" width="2" height="2"/></g></svg></div><div class="win" style="left:256px;top:169px;width:606px;height:599px;background:#fff;box-shadow:0 2px 9px rgba(0,0,0,0.2);border:1px solid #8a8a8a;box-sizing:border-box;overflow:hidden"><svg class="a" style="left:9px;top:7px;" width="20" height="20" viewBox="0 0 20 20"><path d="M6 3 H20 V20 H6 Z" fill="#c9b98f"/><path d="M6.5 3.5 H19 V19 H6.5 Z" fill="#fff"/><path d="M4 1.2 H18 L16.7 17.6 H0.3 Z" fill="url(#npt)"/><g stroke="#b9dde8" stroke-width="0.6"><path d="M3.2 5 H17.4 M2.8 8 H17.2 M2.4 11 H17 M2 14 H16.8"/></g><path d="M4.2 1.2 H18" stroke="#6f7d86" stroke-width="1.6" stroke-dasharray="1.2 0.8"/><defs><linearGradient id="npt" x1="0" y1="0" x2="0.3" y2="1"><stop offset="0" stop-color="#bfe6f2"/><stop offset="1" stop-color="#5fb6d2"/></linearGradient></defs></svg><div class="t ls" style="left:31.5px;top:8.0px;height:20px;line-height:20px;font-size:14.9px;color:#000;">SortMergeJoin - Notepad</div><div class="a" style="left:453px;top:17px;width:11px;height:1px;background:#000"></div><svg class="a" style="left:510.5px;top:11.5px;" width="11" height="11" viewBox="0 0 11 11"><rect x="0.5" y="0.5" width="10" height="10" fill="none" stroke="#000"/></svg><svg class="a" style="left:569.5px;top:11.5px;" width="11" height="11" viewBox="0 0 11 11"><path d="M0.5 0.5 L10.5 10.5 M10.5 0.5 L0.5 10.5" stroke="#000" stroke-width="1"/></svg><div class="t ls" style="left:4px;top:38.0px;height:20px;line-height:20px;font-size:14.4px;color:#000;">File</div><div class="t ls" style="left:34px;top:38.0px;height:20px;line-height:20px;font-size:14.4px;color:#000;">Edit</div><div class="t ls" style="left:66px;top:38.0px;height:20px;line-height:20px;font-size:14.4px;color:#000;">Format</div><div class="t ls" style="left:120px;top:38.0px;height:20px;line-height:20px;font-size:14.4px;color:#000;">View</div><div class="t ls" style="left:159px;top:38.0px;height:20px;line-height:20px;font-size:14.4px;color:#000;">Help</div><div class="a" style="left:-1px;top:59px;width:606px;height:1px;background:#f0f0f0"></div><div class="win" style="left:0px;top:59px;width:579px;height:489px"><div class="t lm" style="left:5.8px;top:2.5500000000000007px;height:21.5px;line-height:21.5px;font-size:16.66px;color:#000;">        private Comparator&lt;Record&gt; _recordComparator;</div><div class="t lm" style="left:5.8px;top:24.049999999999997px;height:21.5px;line-height:21.5px;font-size:16.66px;color:#000;">        private String _sortKey;</div><div class="t lm" style="left:5.8px;top:45.55px;height:21.5px;line-height:21.5px;font-size:16.66px;color:#000;"></div><div class="t lm" style="left:5.8px;top:67.05px;height:21.5px;line-height:21.5px;font-size:16.66px;color:#000;">        public SortMergeJoin(int blockSize, int memorySize) {</div><div class="t lm" style="left:5.8px;top:88.55px;height:21.5px;line-height:21.5px;font-size:16.66px;color:#000;">                _blockSize = blockSize;</div><div class="t lm" style="left:5.8px;top:110.05px;height:21.5px;line-height:21.5px;font-size:16.66px;color:#000;">                _memorySize = memorySize;</div><div class="t lm" style="left:5.8px;top:131.55px;height:21.5px;line-height:21.5px;font-size:16.66px;color:#000;">                _partitionSize = _memorySize / 2;</div><div class="t lm" style="left:5.8px;top:153.05px;height:21.5px;line-height:21.5px;font-size:16.66px;color:#000;">        }</div><div class="t lm" style="left:5.8px;top:174.55px;height:21.5px;line-height:21.5px;font-size:16.66px;color:#000;"></div><div class="t lm" style="left:5.8px;top:196.05px;height:21.5px;line-height:21.5px;font-size:16.66px;color:#000;">        @Override</div><div class="t lm" style="left:5.8px;top:217.55px;height:21.5px;line-height:21.5px;font-size:16.66px;color:#000;">        public void join(Scheme leftScheme, Scheme rightScheme) {</div><div class="t lm" style="left:5.8px;top:239.05px;height:21.5px;line-height:21.5px;font-size:16.66px;color:#000;">                if(leftScheme == null || rightScheme == null)</div><div class="t lm" style="left:5.8px;top:260.55px;height:21.5px;line-height:21.5px;font-size:16.66px;color:#000;">                        throw new IllegalArgumentException(&quot;Scheme cannot be null&quot;);</div><div class="t lm" style="left:5.8px;top:282.05px;height:21.5px;line-height:21.5px;font-size:16.66px;color:#000;"></div><div class="t lm" style="left:5.8px;top:303.55px;height:21.5px;line-height:21.5px;font-size:16.66px;color:#000;">                _sortKey = Scheme.getCommonAttributes(leftScheme, rightScheme);</div><div class="t lm" style="left:5.8px;top:325.05px;height:21.5px;line-height:21.5px;font-size:16.66px;color:#000;">                _recordComparator = new RecordComparator(_sortKey);</div><div class="t lm" style="left:5.8px;top:346.55px;height:21.5px;line-height:21.5px;font-size:16.66px;color:#000;"></div><div class="t lm" style="left:5.8px;top:368.05px;height:21.5px;line-height:21.5px;font-size:16.66px;color:#000;">                // Sort the partitions</div><div class="t lm" style="left:5.8px;top:389.55px;height:21.5px;line-height:21.5px;font-size:16.66px;color:#000;">                List&lt;Record[]&gt; leftPartitions  = sort(leftScheme);</div><div class="t lm" style="left:5.8px;top:411.05px;height:21.5px;line-height:21.5px;font-size:16.66px;color:#000;">                List&lt;Record[]&gt; rightPartitions = sort(rightScheme);</div><div class="t lm" style="left:5.8px;top:432.55px;height:21.5px;line-height:21.5px;font-size:16.66px;color:#000;"></div><div class="t lm" style="left:5.8px;top:454.05px;height:21.5px;line-height:21.5px;font-size:16.66px;color:#000;">                // Merge the partitions</div><div class="t lm" style="left:5.8px;top:475.55px;height:21.5px;line-height:21.5px;font-size:16.66px;color:#000;">                Record[] leftRelation  = merge(leftPartitions);</div></div><div class="a" style="left:583px;top:59px;width:21px;height:489px;background:#f0f0f0"></div><svg class="a" style="left:587px;top:65px;" width="14" height="10" viewBox="0 0 14 10"><path d="M2.5 8 L7 3.5 L11.5 8" fill="none" stroke="#606060" stroke-width="2.4"/></svg><svg class="a" style="left:587px;top:533px;" width="14" height="10" viewBox="0 0 14 10"><path d="M2.5 2 L7 6.5 L11.5 2" fill="none" stroke="#606060" stroke-width="2.4"/></svg><div class="a" style="left:584px;top:102px;width:20px;height:78px;background:#cdcdcd"></div><div class="a" style="left:-1px;top:548px;width:606px;height:21px;background:#f0f0f0"></div><svg class="a" style="left:5px;top:552px;" width="10" height="14" viewBox="0 0 10 14"><path d="M7.5 2.5 L3 7 L7.5 11.5" fill="none" stroke="#606060" stroke-width="2.4"/></svg><div class="a" style="left:21px;top:549px;width:166px;height:19px;background:#cdcdcd"></div><svg class="a" style="left:567px;top:552px;" width="10" height="14" viewBox="0 0 10 14"><path d="M2.5 2.5 L7 7 L2.5 11.5" fill="none" stroke="#606060" stroke-width="2.4"/></svg><div class="a" style="left:-1px;top:569px;width:606px;height:528px;background:#f0f0f0;border-top:1px solid #e3e3e3;box-sizing:border-box"></div><div class="a" style="left:302px;top:570px;width:1px;height:27px;background:#dcdcdc"></div><div class="a" style="left:402px;top:570px;width:1px;height:27px;background:#dcdcdc"></div><div class="a" style="left:503px;top:570px;width:1px;height:27px;background:#dcdcdc"></div><div class="t ls" style="left:316.5px;top:574.2px;height:20px;line-height:20px;font-size:13.7px;color:#000;">Unix (LF)</div><div class="t ls" style="left:417px;top:574.2px;height:20px;line-height:20px;font-size:14px;color:#000;">Ln 1, Col 1</div><div class="t ls" style="left:506px;top:574.2px;height:20px;line-height:20px;font-size:13.8px;color:#000;">100%</div><svg class="a" style="left:591px;top:585px;" width="12" height="12" viewBox="0 0 12 12"><g fill="#a0a0a0"><rect x="8" y="2" width="2" height="2"/><rect x="5" y="5" width="2" height="2"/><rect x="8" y="5" width="2" height="2"/><rect x="2" y="8" width="2" height="2"/><rect x="5" y="8" width="2" height="2"/><rect x="8" y="8" width="2" height="2"/></g></svg></div><div class="a" style="left:0px;top:850px;width:1600px;height:50px;background:#080e16"></div><svg class="a" style="left:20px;top:865px;" width="21" height="21" viewBox="0 0 21 21"><path d="M0 3 L9 1.7 V9.6 H0 Z M10 1.5 L21 0 V9.6 H10 Z M0 10.6 H9 V18.5 L0 17.2 Z M10 10.6 H21 V20.5 L10 19 Z" fill="#fff"/></svg><svg class="a" style="left:79px;top:864px;" width="22" height="22" viewBox="0 0 22 22"><path d="M1.5 1 V20 M13.5 1 V20" stroke="#e8e8e8" stroke-width="1.1"/><rect x="1.5" y="2" width="12" height="3.5" fill="#a8a8a8"/><rect x="1.5" y="16" width="12" height="3.5" fill="#a8a8a8"/><path d="M1.5 2 H13.5 M1.5 5.5 H13.5 M1.5 16 H13.5 M1.5 19.5 H13.5" stroke="#e8e8e8" stroke-width="0.9"/><path d="M19.5 1 V20" stroke="#e8e8e8" stroke-width="1.1"/><circle cx="19.5" cy="9" r="1.7" fill="#fff"/></svg><svg class="a" style="left:141px;top:864px;" width="27" height="23" viewBox="0 0 27 23"><path d="M0 1.5 Q0 0 1.5 0 H10 L12 2.5 H26 V20.5 H0 Z" fill="#f6c53c"/><rect x="0" y="4" width="26" height="16.5" fill="#fde48e"/><rect x="2" y="1" width="5" height="1.8" fill="#fff3c4"/><path d="M4 22 V11 H22 V22 H18.5 V15 H7.5 V22 Z" fill="#3cb0f0"/></svg><div class="a" style="left:129px;top:897px;width:50px;height:3px;background:#76b9ed"></div><svg class="a" style="left:198px;top:856px;" width="36" height="36" viewBox="0 0 36 36"><path fill-rule="evenodd" d="M5.2 16.8 C7 10 12 5.6 18 5.6 C25 5.6 30 10.5 30 17 V21.6 H14 C14.3 25 17.5 27 21.5 27 C24 27 26.3 26 28 24.5 V29.8 C26 31.3 23.5 32 21 32 C13.5 32 8.5 27 8.5 20.5 C8.5 17 10.3 14.2 13.3 12.3 C10.5 12.6 7.5 14.3 5.2 16.8 Z M14 15.6 C14.3 13.2 16 11.8 18.4 11.8 C20.8 11.8 22.4 13.4 22.5 15.6 Z" fill="#1a84e0"/></svg><svg class="a" style="left:264px;top:861px;" width="28" height="28" viewBox="0 0 28 28"><circle cx="14" cy="14" r="13.5" fill="#db4437"/><path d="M14 14 L2.3 7.25 A13.5 13.5 0 0 0 14 27.5 Z" fill="#0f9d58"/><path d="M14 14 L25.7 7.25 A13.5 13.5 0 0 1 14 27.5 Z" fill="#f4b400"/><circle cx="14" cy="14" r="6.2" fill="#fff"/><circle cx="14" cy="14" r="4.9" fill="#4285f4"/></svg><svg class="a" style="left:325px;top:860px;" width="30" height="30" viewBox="0 0 30 30"><circle cx="15" cy="15" r="14.8" fill="#2ca01c"/><path d="M13.5 9 V25 M13.5 10 H10.5 A4.8 4.8 0 0 0 10.5 19.6 H13.5 M16.5 5 V21 M16.5 20 H19.5 A4.8 4.8 0 0 0 19.5 10.4 H16.5" fill="none" stroke="#fff" stroke-width="2"/></svg><svg class="a" style="left:390px;top:859px;" width="24" height="32" viewBox="0 0 24 32"><rect x="1" y="1" width="22" height="30" fill="#fff"/><rect x="3" y="3" width="18" height="5" fill="#080e16"/><path d="M3 11 h4 l-4 4z M9.8 11 h4 l-4 4z M16.6 11 h4 l-4 4z M3 18 h4 l-4 4z M9.8 18 h4 l-4 4z M16.6 18 h4 l-4 4z M3 25 h4 l-4 4z M9.8 25 h4 l-4 4z M16.6 25 h4 l-4 4z " fill="#080e16"/></svg><svg class="a" style="left:451px;top:862px;" width="26" height="26" viewBox="0 0 26 26"><rect x="0" y="0" width="26" height="26" fill="#ffe100"/><path d="M13 13.3 H25 L13 25.3 Z" fill="#080e16"/></svg><div class="a" style="left:439px;top:897px;width:50px;height:3px;background:#76b9ed"></div><svg class="a" style="left:512px;top:861px;" width="28" height="28" viewBox="0 0 28 28"><circle cx="14" cy="14" r="13.5" fill="#db4437"/><path d="M14 14 L2.3 7.25 A13.5 13.5 0 0 0 14 27.5 Z" fill="#0f9d58"/><path d="M14 14 L25.7 7.25 A13.5 13.5 0 0 1 14 27.5 Z" fill="#f4b400"/><circle cx="14" cy="14" r="6.2" fill="#fff"/><circle cx="14" cy="14" r="4.9" fill="#4285f4"/></svg><div class="a" style="left:501px;top:897px;width:50px;height:3px;background:#76b9ed"></div><div class="a" style="left:558px;top:850px;width:60px;height:50px;background:#3b3e45"></div><div class="a" style="left:613px;top:850px;width:5px;height:50px;background:#2c2f35"></div><svg class="a" style="left:572px;top:861.5px;" width="34" height="29" viewBox="0 0 22 19"><path d="M18 1.8 L20 2.8 V14.5 L16.5 16.2 Z" fill="#b38b3c"/><path d="M18.3 2 L16.4 16.1 L11.7 14.4 Z" fill="#e4edf1"/><path d="M8 0.5 L18.3 2 L11.7 14.4 L1 12 Z" fill="url(#npb)"/><path d="M8 0.8 L18.3 2.3" stroke="#8a979b" stroke-width="1.3"/></svg><div class="a" style="left:558px;top:897px;width:60px;height:3px;background:#76b9ed"></div><svg class="a" style="left:1298px;top:869px;" width="16" height="10" viewBox="0 0 16 10"><path d="M1 9 L8 2 L15 9" fill="none" stroke="#fff" stroke-width="1.2"/></svg><svg class="a" style="left:1325px;top:867px;" width="24" height="16" viewBox="0 0 24 16"><path d="M4.5 14.5 C1.5 14.5 0.5 12 1.5 10 C2.3 8.5 4 8 5.5 8.3 C6.5 4 9.5 1.5 13 1.5 C16.5 1.5 19.3 4 19.8 7.2 C22 7.6 23 9.5 22.6 11.5 C22.2 13.3 21 14.5 19 14.5 Z" fill="#ececec"/><path d="M5.5 8.3 C6.5 4 9.5 1.5 13 1.5 C16.5 1.5 19.3 4 19.8 7.2 C17 7 14.5 8 12.5 9.8 C10.5 8.5 8 8 5.5 8.3 Z" fill="#9b9b9b"/></svg><svg class="a" style="left:1355px;top:866px;" width="24" height="18" viewBox="0 0 24 18"><path d="M3 1 V5 M6 1 V5 M2 5 H7 V8 C7 10 4.5 10 4.5 10 V17" fill="none" stroke="#fff" stroke-width="1.3"/><rect x="8.5" y="6.5" width="12" height="8" fill="none" stroke="#fff" stroke-width="1.3"/><rect x="10" y="8" width="9" height="5" fill="#fff"/><rect x="21" y="9" width="2" height="3" fill="#fff"/></svg><svg class="a" style="left:1389px;top:866px;" width="18" height="18" viewBox="0 0 18 18"><g fill="none" stroke="#fff" stroke-width="1.2"><path d="M1 17 A16 16 0 0 1 17 1"/><path d="M4.5 17 A12.5 12.5 0 0 1 17 4.5"/><path d="M8 17 A9 9 0 0 1 17 8"/></g><circle cx="14.5" cy="14.5" r="1.6" fill="#fff"/></svg><svg class="a" style="left:1415px;top:866px;" width="24" height="18" viewBox="0 0 24 18"><path d="M2 6 H5 L10 2 V16 L5 12 H2 Z" fill="none" stroke="#fff" stroke-width="1.2"/><path d="M13 6 A4 4 0 0 1 13 12 M15.5 4 A7 7 0 0 1 15.5 14 M18 2 A10 10 0 0 1 18 16" fill="none" stroke="#ddd" stroke-width="1.1"/></svg><div class="t ls" style="left:1440px;top:854.0px;height:20px;line-height:20px;font-size:14.2px;color:#fff;width:94px;text-align:center;">23:10</div><div class="t ls" style="left:1440px;top:877.0px;height:20px;line-height:20px;font-size:15px;color:#fff;width:94px;text-align:center;">06/07/2019</div><svg class="a" style="left:1547px;top:864px;" width="32" height="32" viewBox="0 0 32 32"><path d="M2 2 H21 V16 H9 L5 20 V16 H2 Z" fill="#fff"/><g stroke="#080e16" stroke-width="1.2"><path d="M5 6 H18 M5 9 H18 M5 12 H14"/></g><circle cx="20" cy="20" r="9.5" fill="#2b2f36" stroke="#686c73" stroke-width="1"/></svg><div class="t ls" style="left:1557px;top:874.5px;height:20px;line-height:20px;font-size:14.5px;color:#fff;width:20px;text-align:center;">1</div><div class="a" style="left:1593px;top:850px;width:1px;height:50px;background:#5f6266"></div></body></html>
